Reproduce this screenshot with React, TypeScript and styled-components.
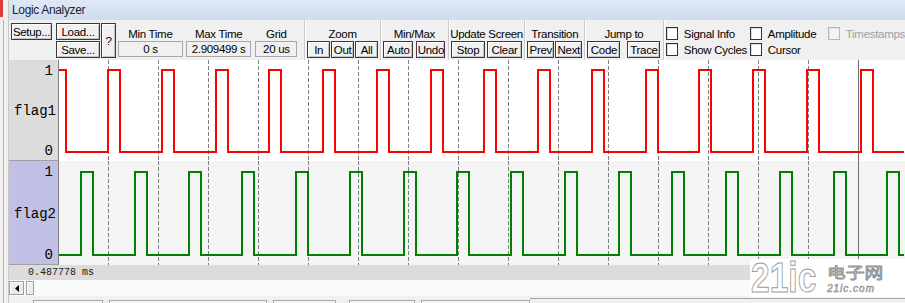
import React from "react";
import styled, { createGlobalStyle } from "styled-components";

const GlobalStyle = createGlobalStyle`
  * { box-sizing: border-box; }
  html, body { margin: 0; padding: 0; background: #f0f0f0; }
  body { font-family: "Liberation Sans", Arial, sans-serif; overflow: hidden; }
`;

// waveform geometry (page x minus the 60px of frame + label panel)
const WAVE_X = 60;
const WAVE_W = 845;
const PERIOD = 53.75;
const PULSE = 12;

function buildPulses(firstRise: number, high: number, low: number) {
  let start = firstRise - WAVE_X;
  while (start > 0) start -= PERIOD;
  let d = `M -20 ${low}`;
  for (let x = start; x < WAVE_W + 20; x += PERIOD) {
    const r = Math.round(x);
    const f = Math.round(x + PULSE);
    d += ` L ${r} ${low} L ${r} ${high} L ${f} ${high} L ${f} ${low}`;
  }
  return d + ` L ${WAVE_W + 20} ${low}`;
}

const gridLines = Array.from({ length: 15 }, (_, i) => 109 - WAVE_X + 50 * i + 0.5);

const traces = [
  { name: "flag1", color: "#ff0000", bg: "#ffffff", panel: "#dcdcdc", h: 101, path: buildPulses(109, 10, 92) },
  { name: "flag2", color: "#008000", bg: "#f4f4f4", panel: "#c0c0e4", h: 104, path: buildPulses(82, 11, 94) },
];

function Trace({ t }: { t: (typeof traces)[number] }) {
  return (
    <TraceRow $h={t.h} $bg={t.bg}>
      <LabelPanel $bg={t.panel}>
        <LevelText>1</LevelText>
        <SignalName>{t.name}</SignalName>
        <LevelText>0</LevelText>
      </LabelPanel>
      <svg width={WAVE_W} height={t.h} style={{ display: "block" }}>
        {gridLines.map((x) => (
          <line key={x} x1={x} x2={x} y1={0} y2={t.h} stroke="#808080" strokeWidth={1} strokeDasharray="4 2" />
        ))}
        <line x1={799.5} x2={799.5} y1={0} y2={t.h} stroke="#707070" strokeWidth={1} />
        <path d={t.path} fill="none" stroke={t.color} strokeWidth={2} />
      </svg>
    </TraceRow>
  );
}

export default function App() {
  return (
    <>
      <GlobalStyle />
      <Window>
        <SideStrip>
          <RedMark />
        </SideStrip>
        <Main>
          <TitleBar>Logic Analyzer</TitleBar>
          <Toolbar>
            <FileBlock>
              <Btn $area="setup">Setup...</Btn>
              <Btn $area="load">Load...</Btn>
              <Btn $area="save">Save...</Btn>
              <Btn $area="help">?</Btn>
            </FileBlock>
            <Field $w={65} $ml={2}>
              <GroupLabel>Min Time</GroupLabel>
              <ValueBox>0 s</ValueBox>
            </Field>
            <Field $w={66} $ml={3}>
              <GroupLabel>Max Time</GroupLabel>
              <ValueBox>2.909499 s</ValueBox>
            </Field>
            <Field $w={42} $ml={4}>
              <GroupLabel>Grid</GroupLabel>
              <ValueBox>20 us</ValueBox>
            </Field>
            <Separator $ml={7} />
            <Group $w={75}>
              <GroupLabel>Zoom</GroupLabel>
              <BtnRow $gap={1}>
                <Btn $w={23}>In</Btn>
                <Btn $w={23}>Out</Btn>
                <Btn $w={23}>All</Btn>
              </BtnRow>
            </Group>
            <Separator />
            <Group $w={67}>
              <GroupLabel>Min/Max</GroupLabel>
              <BtnRow $gap={3}>
                <Btn $w={30}>Auto</Btn>
                <Btn $w={29} $accent>Undo</Btn>
              </BtnRow>
            </Group>
            <Separator />
            <Group $w={76}>
              <GroupLabel>Update Screen</GroupLabel>
              <BtnRow $gap={2}>
                <Btn $w={34}>Stop</Btn>
                <Btn $w={35}>Clear</Btn>
              </BtnRow>
            </Group>
            <Separator />
            <Group $w={59}>
              <GroupLabel>Transition</GroupLabel>
              <BtnRow $gap={1}>
                <Btn $w={27}>Prev</Btn>
                <Btn $w={27}>Next</Btn>
              </BtnRow>
            </Group>
            <Separator />
            <Group $w={78}>
              <GroupLabel>Jump to</GroupLabel>
              <BtnRow $gap={7}>
                <Btn $w={33}>Code</Btn>
                <Btn $w={33}>Trace</Btn>
              </BtnRow>
            </Group>
            <Separator />
            <CheckGrid>
              <CheckItem>
                <CheckBox />
                Signal Info
              </CheckItem>
              <CheckItem>
                <CheckBox />
                Amplitude
              </CheckItem>
              <CheckItem $disabled>
                <CheckBox $disabled />
                Timestamps
              </CheckItem>
              <CheckItem>
                <CheckBox />
                Show Cycles
              </CheckItem>
              <CheckItem>
                <CheckBox />
                Cursor
              </CheckItem>
            </CheckGrid>
          </Toolbar>

          {traces.map((t) => (
            <Trace key={t.name} t={t} />
          ))}

          <TimeBar>0.487778 ms</TimeBar>
          <ScrollRow>
            <ArrowBtn>
              <svg width="4" height="7" viewBox="0 0 4 7">
                <polygon points="4,0 0,3.5 4,7" fill="#000" />
              </svg>
            </ArrowBtn>
            <Thumb />
          </ScrollRow>
          <TabStrip>
            <Tab $w={70} $ml={24} />
            <Tab $w={158} $ml={6} />
            <Tab $w={63} $ml={6} />
            <Tab $w={66} $ml={13} />
            <Tab $w={109} $ml={6} />
            <TabFiller />
          </TabStrip>
        </Main>

        <Watermark>
          <WmBig>21ic</WmBig>
          <WmRight>
            <WmCjk>电子网</WmCjk>
            <WmSmall>21ic.com</WmSmall>
          </WmRight>
        </Watermark>
      </Window>
    </>
  );
}

const Window = styled.div`
  position: relative;
  display: flex;
  width: 905px;
  height: 303px;
  overflow: hidden;
  background: #f0f0f0;
`;

const SideStrip = styled.div`
  width: 9px;
  flex-shrink: 0;
  position: relative;
  background: #f0f0f0;
  border-right: 1px solid #c8c8c8;
  &::after {
    content: "";
    display: block;
    margin: 3px 0 0 3px;
    height: 283px;
    border-left: 1px solid #b4b4b4;
  }
`;

const RedMark = styled.div`
  width: 3px;
  height: 17px;
  background: #e03c3c;
`;

const Main = styled.div`
  flex: 1;
  display: flex;
  flex-direction: column;
  min-width: 0;
`;

const TitleBar = styled.div`
  height: 20px;
  padding-left: 3px;
  background: linear-gradient(#dfe8f5, #cfdcef);
  color: #1b2433;
  font-size: 12px;
  letter-spacing: -0.35px;
  line-height: 21px;
`;

const Toolbar = styled.div`
  height: 40px;
  display: flex;
  padding-left: 2px;
  background: #f0f0f0;
  font-size: 11.5px;
  letter-spacing: -0.3px;
  color: #000;
`;

const FileBlock = styled.div`
  display: grid;
  grid-template-columns: 41px 4px 44px 1px 15px;
  grid-template-rows: 17px 17px;
  row-gap: 1px;
  grid-template-areas:
    "setup . load . help"
    ". . save . help";
  padding-top: 3px;
`;

const Btn = styled.button<{ $w?: number; $area?: string; $accent?: boolean }>`
  grid-area: ${(p) => p.$area ?? "auto"};
  width: ${(p) => (p.$w ? `${p.$w}px` : "auto")};
  height: ${(p) => (p.$area ? "auto" : "17px")};
  padding: 0;
  margin: 0;
  font: inherit;
  letter-spacing: inherit;
  line-height: 14px;
  color: #000;
  text-align: center;
  background: #f0f0f0;
  border: 1px solid ${(p) => (p.$accent ? "#5a2c5a" : "#3a3a3a")};
  box-shadow: inset 1px 1px 0 #ffffff, inset -1px -1px 0 #c4c4c4;
`;

const Field = styled.div<{ $w: number; $ml: number }>`
  width: ${(p) => p.$w}px;
  margin-left: ${(p) => p.$ml}px;
  display: flex;
  flex-direction: column;
`;

const GroupLabel = styled.div`
  height: 21px;
  padding-top: 7px;
  line-height: 14px;
  text-align: center;
  white-space: nowrap;
`;

const ValueBox = styled.div`
  height: 16px;
  border: 1px solid #a8a8a8;
  background: #f0f0f0;
  text-align: center;
  line-height: 14px;
  white-space: nowrap;
`;

const Separator = styled.div<{ $ml?: number }>`
  width: 1px;
  margin-left: ${(p) => p.$ml ?? 0}px;
  background: #c9c9c9;
  box-shadow: 1px 0 0 #ffffff;
`;

const Group = styled.div<{ $w: number }>`
  width: ${(p) => p.$w}px;
  display: flex;
  flex-direction: column;
`;

const BtnRow = styled.div<{ $gap: number }>`
  display: flex;
  justify-content: center;
  gap: ${(p) => p.$gap}px;
`;

const CheckGrid = styled.div`
  display: grid;
  grid-template-columns: 84px 78px auto;
  grid-auto-rows: 13px;
  row-gap: 3px;
  padding: 7px 0 0 2px;
`;

const CheckItem = styled.label<{ $disabled?: boolean }>`
  display: flex;
  align-items: center;
  gap: 6px;
  white-space: nowrap;
  color: ${(p) => (p.$disabled ? "#a0a0a0" : "#000")};
`;

const CheckBox = styled.span<{ $disabled?: boolean }>`
  width: 12px;
  height: 13px;
  flex-shrink: 0;
  border: 1px solid ${(p) => (p.$disabled ? "#b8b8b8" : "#333333")};
  background: ${(p) => (p.$disabled ? "#f4f4f4" : "#ffffff")};
  box-shadow: inset 1px 1px 0 ${(p) => (p.$disabled ? "#e0e0e0" : "#dcdcdc")};
`;

const TraceRow = styled.div<{ $h: number; $bg: string }>`
  display: flex;
  height: ${(p) => p.$h}px;
  background: ${(p) => p.$bg};
  flex-shrink: 0;
`;

const LabelPanel = styled.div<{ $bg: string }>`
  width: 50px;
  flex-shrink: 0;
  display: flex;
  flex-direction: column;
  justify-content: space-between;
  padding: 4px 5px 2px 5px;
  background: ${(p) => p.$bg};
  border-right: 1px solid #808080;
  border-bottom: 1px solid #a0a0a0;
  font-family: "Liberation Mono", "Courier New", monospace;
  font-size: 14px;
  line-height: 14px;
  color: #000;
`;

const LevelText = styled.div`
  text-align: right;
`;

const SignalName = styled.div`
  text-align: left;
`;

const TimeBar = styled.div`
  height: 15px;
  padding-left: 19px;
  background: #dcdcdc;
  font-family: "Liberation Mono", "Courier New", monospace;
  font-size: 10px;
  line-height: 15px;
  color: #1a1a1a;
`;

const ScrollRow = styled.div`
  height: 16px;
  display: flex;
  align-items: flex-start;
  gap: 2px;
  padding-top: 1px;
  background: repeating-conic-gradient(#f6f6f6 0 25%, #fdfdfd 0 50%) 0 0 / 2px 2px;
`;

const ArrowBtn = styled.div`
  width: 15px;
  height: 14px;
  display: flex;
  align-items: center;
  justify-content: center;
  background: #ececec;
  border: 1px solid #a0a0a0;
  box-shadow: inset 1px 1px 0 #fff;
`;

const Thumb = styled.div`
  width: 8px;
  height: 14px;
  background: #ececec;
  border: 1px solid #a0a0a0;
  box-shadow: inset 1px 1px 0 #fff;
`;

const TabStrip = styled.div`
  flex: 1;
  display: flex;
  align-items: flex-end;
  background: #f0f0f0;
`;

const Tab = styled.div<{ $w: number; $ml: number }>`
  width: ${(p) => p.$w}px;
  margin-left: ${(p) => p.$ml}px;
  height: 3px;
  border: 1px solid #a8a8a8;
  border-bottom: none;
  background: #f4f4f4;
`;

const TabFiller = styled.div`
  flex: 1;
  height: 5px;
  border-top: 1px solid #a8a8a8;
`;

const Watermark = styled.div`
  position: absolute;
  left: 750px;
  top: 259px;
  width: 155px;
  height: 38px;
  display: flex;
  align-items: center;
  gap: 4px;
  padding-left: 1px;
  background: #ffffff;
`;

const WmBig = styled.span`
  display: inline-block;
  width: 72px;
  transform: scaleX(0.8);
  transform-origin: left center;
  font: bold 42px/1 "Liberation Sans", Arial, sans-serif;
  color: #ffffff;
  -webkit-text-stroke: 1px #9a9a9a;
`;

const WmRight = styled.div`
  display: flex;
  flex-direction: column;
  align-items: flex-start;
  gap: 1px;
`;

const WmCjk = styled.span`
  display: block;
  transform: scaleX(1.25);
  transform-origin: left center;
  font: 15px/21px "Noto Sans CJK SC", sans-serif;
  color: #ffffff;
  -webkit-text-stroke: 0.8px #8a8a8a;
`;

const WmSmall = styled.span`
  display: block;
  font: italic 10px/12px "Liberation Sans", Arial, sans-serif;
  color: #ffffff;
  -webkit-text-stroke: 0.6px #8a8a8a;
  letter-spacing: 1px;
`;
